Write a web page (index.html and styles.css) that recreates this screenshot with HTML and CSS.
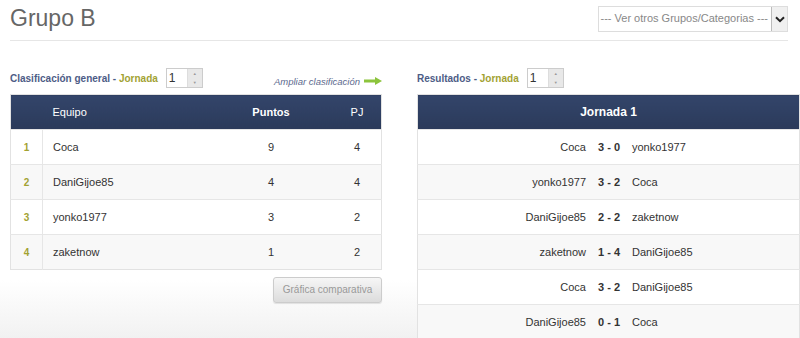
FILE: index.html
```html
<!doctype html>
<html>
<head>
	<meta charset="utf-8">
	<title>Grupo B</title>
	<link rel="stylesheet" href="styles.css">
</head>
<body>
	<div class="top">
		<h1>Grupo B</h1>
		<div class="select">
			<span class="select-text">--- Ver otros Grupos/Categorias ---</span>
			<span class="select-btn">
				<svg width="10" height="7" viewBox="0 0 10 7"><path d="M1 1.2 L5 5.2 L9 1.2" fill="none" stroke="#222" stroke-width="2"/></svg>
			</span>
		</div>
	</div>

	<div class="columns">
		<div class="col-left">
			<div class="bar">
				<div class="label">
					<span class="blue">Clasificación general</span> - <span class="olive">Jornada</span>
					<span class="spin"><span class="spin-val">1</span><span class="spin-btns"><i>&#9650;</i><i>&#9660;</i></span></span>
				</div>
				<a class="more">Ampliar clasificación
					<svg width="18" height="8" viewBox="0 0 18 8"><path d="M0 2.5 H11 V0 L18 4 L11 8 V5.5 H0 Z" fill="#8cc43c"/></svg>
				</a>
			</div>
			<table class="grid standings">
				<tr class="head">
					<th class="rank"></th>
					<th class="team">Equipo</th>
					<th class="pts">Puntos</th>
					<th class="pj">PJ</th>
				</tr>
				<tr><td class="rank">1</td><td class="team">Coca</td><td class="pts">9</td><td class="pj">4</td></tr>
				<tr><td class="rank">2</td><td class="team">DaniGijoe85</td><td class="pts">4</td><td class="pj">4</td></tr>
				<tr><td class="rank">3</td><td class="team">yonko1977</td><td class="pts">3</td><td class="pj">2</td></tr>
				<tr><td class="rank">4</td><td class="team">zaketnow</td><td class="pts">1</td><td class="pj">2</td></tr>
			</table>
			<div class="actions">
				<span class="button">Gráfica comparativa</span>
			</div>
		</div>

		<div class="col-right">
			<div class="bar">
				<div class="label">
					<span class="blue">Resultados</span> - <span class="olive">Jornada</span>
					<span class="spin"><span class="spin-val">1</span><span class="spin-btns"><i>&#9650;</i><i>&#9660;</i></span></span>
				</div>
			</div>
			<table class="grid results">
				<tr class="head"><th colspan="3">Jornada 1</th></tr>
				<tr><td class="home">Coca</td><td class="score">3 - 0</td><td class="away">yonko1977</td></tr>
				<tr><td class="home">yonko1977</td><td class="score">3 - 2</td><td class="away">Coca</td></tr>
				<tr><td class="home">DaniGijoe85</td><td class="score">2 - 2</td><td class="away">zaketnow</td></tr>
				<tr><td class="home">zaketnow</td><td class="score">1 - 4</td><td class="away">DaniGijoe85</td></tr>
				<tr><td class="home">Coca</td><td class="score">3 - 2</td><td class="away">DaniGijoe85</td></tr>
				<tr><td class="home">DaniGijoe85</td><td class="score">0 - 1</td><td class="away">Coca</td></tr>
			</table>
		</div>
	</div>
</body>
</html>
```

FILE: styles.css
```css
body {
	margin: 0;
	padding: 0 0 0 10px;
	font-family: "Liberation Sans", Arial, sans-serif;
	font-size: 11px;
	color: #333;
	background: linear-gradient(to top, #f1f1f1, #fff 60px);
	min-height: 338px;
	box-sizing: border-box;
	overflow: hidden;
}

.top {
	display: flex;
	justify-content: space-between;
	align-items: flex-start;
	height: 40px;
	margin-right: 12px;
	border-bottom: 1px solid #e6e6e6;
}

h1 {
	margin: 5px 0 0;
	font-size: 23px;
	font-weight: normal;
	color: #666;
}

.select {
	display: flex;
	margin-top: 6px;
	height: 24px;
	border: 1px solid #ddd;
	background: #fff;
}

.select-text {
	padding: 0 3px 0 2px;
	line-height: 23px;
	font-size: 11px;
	color: #888;
}

.select-btn {
	display: flex;
	align-items: center;
	justify-content: center;
	width: 15px;
	border-left: 1px solid #bbb;
	background: #f0f0f0;
}

.columns {
	display: flex;
	gap: 35px;
	margin-top: 27px;
}

.col-left {
	width: 372px;
}

.col-right {
	flex: 1;
	background: #fff;
}

.bar {
	display: flex;
	justify-content: space-between;
	align-items: center;
	height: 20px;
	margin-bottom: 6px;
	background: #fff;
}

.label {
	display: flex;
	align-items: center;
	font-size: 10px;
	font-weight: bold;
	color: #4d5c86;
	white-space: pre;
}

.blue {
	color: #4d5c86;
}

.olive {
	color: #a2a232;
}

.spin {
	display: flex;
	margin-left: 8px;
	width: 35px;
	height: 18px;
	border: 1px solid #ccc;
	background: #fff;
}

.spin-val {
	flex: 1;
	padding-left: 2px;
	font-size: 12px;
	font-weight: normal;
	color: #333;
	line-height: 18px;
}

.spin-btns {
	display: flex;
	flex-direction: column;
	width: 14px;
	background: #e8e8e8;
	border-left: 1px solid #ddd;
}

.spin-btns i {
	flex: 1;
	font-style: normal;
	font-size: 4px;
	line-height: 9px;
	text-align: center;
	color: #999;
}

.more {
	display: flex;
	align-items: center;
	gap: 4px;
	margin-top: 6px;
	font-size: 9.5px;
	font-style: italic;
	color: #5d6a8e;
}

.grid {
	width: 100%;
	border-collapse: collapse;
	border: 1px solid #e2e2e2;
	background: #fff;
}

.grid .head th {
	height: 34px;
	padding: 0;
	background: linear-gradient(#33456a, #2b3a5a);
	color: #fff;
	font-size: 11px;
	font-weight: normal;
	text-align: left;
}

.grid td {
	height: 34px;
	padding: 0;
	border-top: 1px solid #e6e6e6;
	background: #fff;
}

.grid tr:nth-child(odd) td {
	background: #f8f8f8;
}

.standings .rank {
	width: 31px;
	text-align: center;
	border-right: 1px solid #e6e6e6;
	color: #a2a232;
}

.standings td.rank {
	font-weight: bold;
	font-size: 10px;
}

.standings .head .rank {
	border-right: 0;
}

.standings td.team,
.standings .head th.team {
	padding-left: 10px;
}

.standings .head th.pts {
	font-weight: bold;
}

.standings .pts,
.standings .head th.pts {
	width: 124px;
	text-align: center;
}

.standings .pj,
.standings .head th.pj {
	width: 48px;
	text-align: center;
}

.actions {
	display: flex;
	justify-content: flex-end;
	margin-top: 7px;
}

.button {
	display: inline-block;
	width: 107px;
	height: 24px;
	line-height: 24px;
	text-align: center;
	border: 1px solid #ccc;
	border-radius: 3px;
	background: linear-gradient(#f6f6f6, #dcdcdc);
	color: #999;
	font-size: 10px;
	box-shadow: 0 1px 1px rgba(0, 0, 0, 0.1);
}

.results .head th {
	text-align: center;
	font-weight: bold;
	font-size: 12px;
}

.results .home {
	width: 168px;
	text-align: right;
}

.results .score {
	width: 46px;
	text-align: center;
	font-weight: bold;
}

.results .away {
	text-align: left;
}
```
